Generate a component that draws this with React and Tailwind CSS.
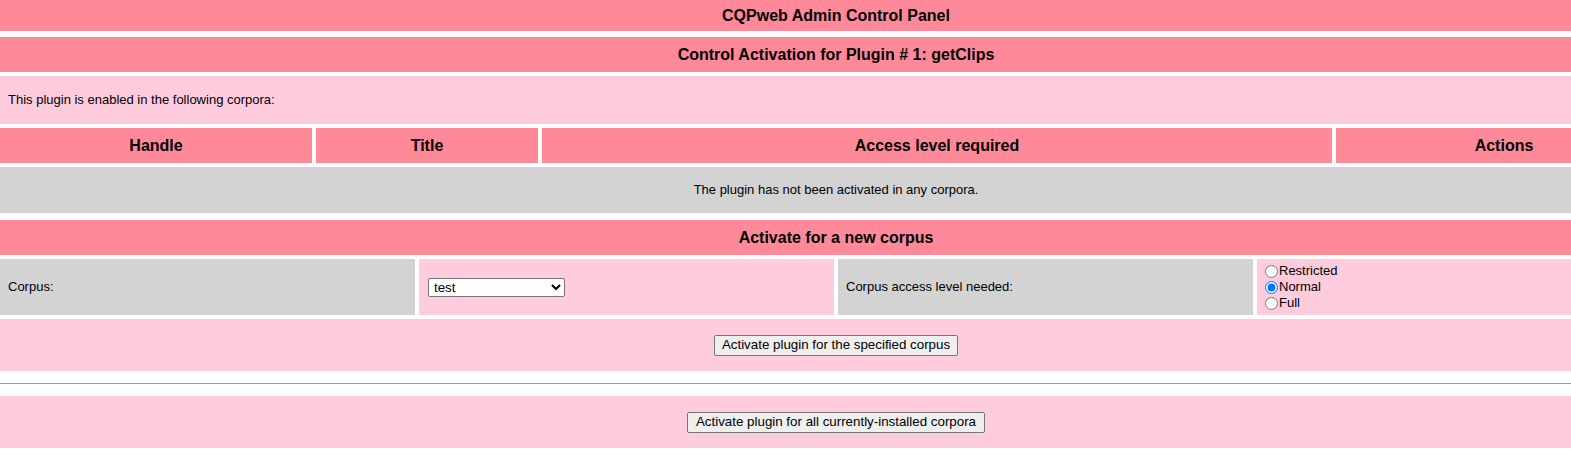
// CQPweb admin panel — plugin activation page, laid out as stacked "table" rows.

const font = { fontFamily: '"Liberation Sans", Arial, sans-serif' };

function HeadBar({ children, className = '' }) {
  return (
    <div className={`bg-[#ff8899] flex items-center justify-center text-[16px] font-bold text-black ${className}`}>
      {children}
    </div>
  );
}

function Radio({ label, checked = false }) {
  return (
    <label className="flex items-center h-[16px] text-[13px] text-black">
      <input
        type="radio"
        name="level"
        defaultChecked={checked}
        className="m-0 ml-[8px] mr-[1px] w-[13px] h-[13px]"
      />
      {label}
    </label>
  );
}

export default function App() {
  return (
    <div className="w-full overflow-hidden bg-white" style={font}>
      <div className="w-[1672px] flex flex-col">
        {/* Page title */}
        <HeadBar className="h-[31px]">CQPweb Admin Control Panel</HeadBar>

        {/* Current activations */}
        <div className="mt-[6px] flex flex-col gap-1">
          <HeadBar className="h-[35px]">Control Activation for Plugin # 1: getClips</HeadBar>
          <div className="h-[48px] bg-[#ffccdd] flex items-center px-2 text-[13px] text-black">
            This plugin is enabled in the following corpora:
          </div>
          <div className="flex gap-1 h-[35px]">
            <HeadBar className="w-[312px]">Handle</HeadBar>
            <HeadBar className="w-[222px]">Title</HeadBar>
            <HeadBar className="w-[790px]">Access level required</HeadBar>
            <HeadBar className="w-[336px]">Actions</HeadBar>
          </div>
          <div className="h-[46px] bg-[#d3d3d3] flex items-center justify-center text-[13px] text-black">
            The plugin has not been activated in any corpora.
          </div>
        </div>

        {/* Activate for a new corpus */}
        <div className="mt-[7px] flex flex-col gap-1">
          <HeadBar className="h-[35px]">Activate for a new corpus</HeadBar>
          <div className="grid grid-cols-4 gap-1 h-[56px] text-[13px] text-black">
            <div className="bg-[#d3d3d3] flex items-center px-2">Corpus:</div>
            <div className="bg-[#ffccdd] flex items-center px-2">
              <select
                defaultValue="test"
                className="ml-[1px] w-[137px] h-[19px] bg-white border border-[#767676] rounded-[2px] text-[13.33px] text-black pl-[1px]"
              >
                <option value="test">test</option>
              </select>
            </div>
            <div className="bg-[#d3d3d3] flex items-center px-2">Corpus access level needed:</div>
            <div className="bg-[#ffccdd] flex flex-col justify-center">
              <Radio label="Restricted" />
              <Radio label="Normal" checked />
              <Radio label="Full" />
            </div>
          </div>
          <div className="h-[52px] bg-[#ffccdd] flex items-center justify-center">
            <button className="h-[21px] px-[7px] bg-[#efefef] border border-[#767676] rounded-[2px] text-[13.33px] text-black leading-none">
              Activate plugin for the specified corpus
            </button>
          </div>
        </div>

        <div className="mt-[12px] mb-[12px] w-[1571px] border-t border-[#9a9a9a]" />

        <div className="h-[52px] bg-[#ffccdd] flex items-center justify-center">
          <button className="h-[21px] px-[8px] bg-[#efefef] border border-[#767676] rounded-[2px] text-[13.33px] text-black leading-none">
            Activate plugin for all currently-installed corpora
          </button>
        </div>
      </div>
    </div>
  );
}
